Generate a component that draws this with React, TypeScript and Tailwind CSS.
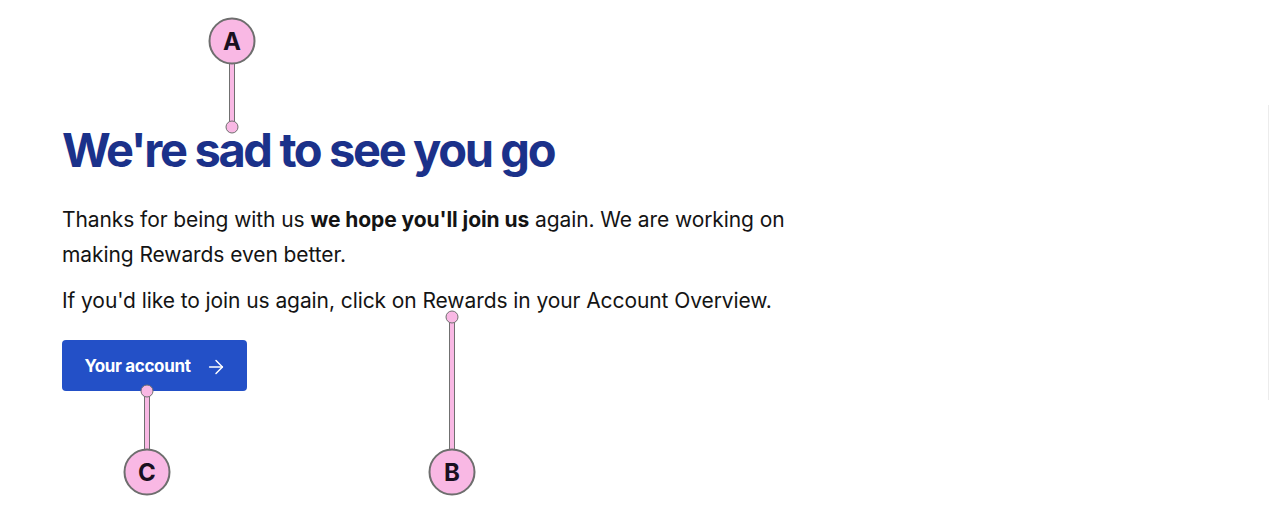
import { ArrowRight } from "lucide-react"

type PinProps = {
    label: string
    x: number
    circleY: number
    dotY: number
}

// annotation pin: circle with letter, stem and a small dot at the target
function Pin({ label, x, circleY, dotY }: PinProps) {
    const top = Math.min(circleY, dotY)
    const bottom = Math.max(circleY, dotY)
    return (
        <>
            <div
                className="absolute w-[6px] -translate-x-1/2 bg-[#f9b8e4] border-x-[1.5px] border-[#707070]"
                style={{ left: x, top, height: bottom - top }}
            />
            <div
                className="absolute w-[13px] h-[13px] -translate-x-1/2 -translate-y-1/2 rounded-full bg-[#f9b8e4] border-[1.5px] border-[#707070]"
                style={{ left: x, top: dotY }}
            />
            <div
                className="absolute w-[47px] h-[47px] -translate-x-1/2 -translate-y-1/2 rounded-full bg-[#f9b8e4] border-2 border-[#6e6e6e] flex items-center justify-center text-[24px] font-bold text-[#1a1020]"
                style={{ left: x, top: circleY, fontFamily: "Inter, sans-serif" }}
            >
                {label}
            </div>
        </>
    )
}

export default function App() {
    return (
        <div className="relative w-[1280px] h-[514px] bg-white overflow-hidden" style={{ fontFamily: "Inter, 'Noto Sans', sans-serif" }}>
            <div className="pt-[120px] pl-[62px] w-[800px] flex flex-col items-start">
                <h1 className="text-[47px] leading-[60px] font-bold tracking-[-0.05em] text-[#1b318a]">
                    We're sad to see you go
                </h1>
                <p className="mt-[22px] text-[21px] leading-[35px] tracking-[-0.004em] text-[#141414]">
                    Thanks for being with us <span className="font-bold">we hope you'll join us</span> again. We are working on
                    <br />
                    making Rewards even better.
                </p>
                <p className="mt-[11px] text-[21px] leading-[35px] tracking-[-0.004em] text-[#141414]">
                    If you'd like to join us again, click on Rewards in your Account Overview.
                </p>
                <button className="mt-[22px] h-[51px] w-[185px] pt-[2px] pl-[2px] rounded-[4px] bg-[#2350c7] text-white flex items-center justify-center gap-[14px] text-[17px] font-bold tracking-[-0.02em]">
                    Your account
                    <ArrowRight className="w-[22px] h-[22px]" strokeWidth={1.6} />
                </button>
            </div>

            <div className="absolute left-[1268px] top-[105px] h-[295px] w-px bg-[#ececec]" />

            <Pin label="A" x={232} circleY={41} dotY={127} />
            <Pin label="B" x={452} circleY={472} dotY={317} />
            <Pin label="C" x={147} circleY={472} dotY={391} />
        </div>
    )
}
